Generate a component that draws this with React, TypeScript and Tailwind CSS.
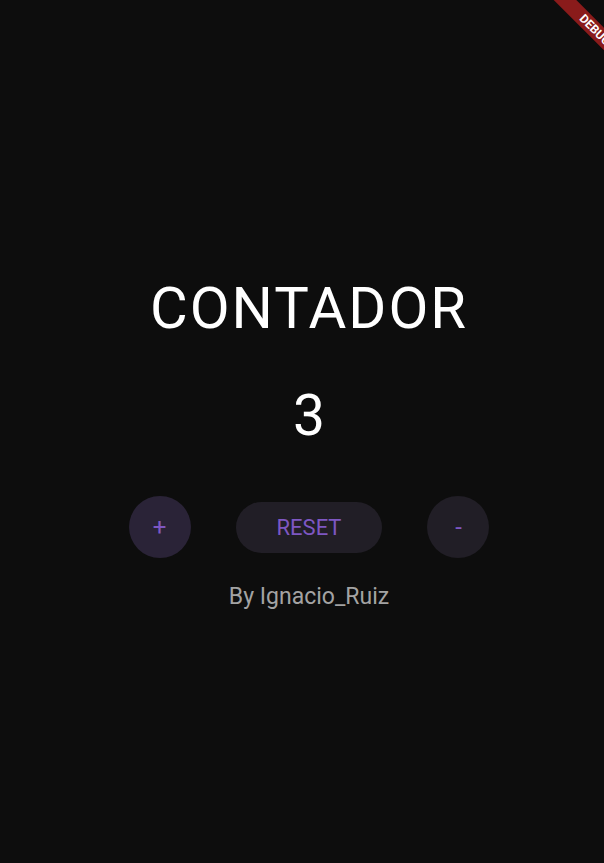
import { FC, useState } from "react";

interface RoundButtonProps {
  label: string;
  onClick: () => void;
  active?: boolean;
}

const RoundButton: FC<RoundButtonProps> = ({ label, onClick, active }) => {
  return (
    <button
      className={`w-[62px] h-[62px] rounded-full flex items-center justify-center text-[24px] text-[#7e57c2] ${
        active ? "bg-[#2a2337]" : "bg-[#211e26]"
      }`}
      onClick={onClick}
    >
      {label}
    </button>
  );
};

const App: FC = () => {
  const [count, setCount] = useState(3);

  return (
    <div
      className="relative w-full h-[863px] overflow-hidden bg-[#0d0d0d] text-white"
      style={{ fontFamily: "Roboto, 'Liberation Sans', sans-serif" }}
    >
      {/* Debug banner */}
      <div className="absolute left-[540px] top-[22px] w-[110px] h-[16px] rotate-45 bg-[#8a1b1b] flex items-center justify-center">
        <span className="text-[12px] font-bold leading-none text-white">
          DEBUG
        </span>
      </div>

      {/* Content */}
      <div className="flex flex-col items-center pt-[276px] pl-[14px]">
        <div className="text-[58px] leading-[64px] tracking-[2px]">CONTADOR</div>
        <div className="mt-[44px] text-[57px] leading-[64px]">{count}</div>
        <div className="mt-[48px] flex items-center gap-[45px]">
          <RoundButton label="+" active onClick={() => setCount(count + 1)} />
          <button
            className="h-[51px] px-[41px] rounded-full bg-[#211e26] text-[22px] text-[#7e57c2]"
            onClick={() => setCount(0)}
          >
            RESET
          </button>
          <RoundButton label="-" onClick={() => setCount(count - 1)} />
        </div>
        <div className="mt-[25px] text-[23px] leading-[28px] text-[#a3a3a3]">
          By Ignacio_Ruiz
        </div>
      </div>
    </div>
  );
};

export default App;
